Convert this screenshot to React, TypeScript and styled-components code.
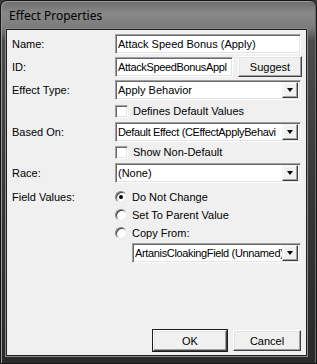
import React from 'react'
import styled, { createGlobalStyle } from 'styled-components'

const GlobalStyle = createGlobalStyle`
  html, body {
    margin: 0;
    padding: 0;
    background: #3a3a3a;
  }
  body {
    font-family: "Liberation Sans", Arial, sans-serif;
    font-size: 11px;
    color: #000;
  }
`

const Window = styled.div`
  box-sizing: border-box;
  width: 317px;
  height: 364px;
  display: flex;
  flex-direction: column;
  border: 1px solid #141414;
  border-radius: 7px 7px 0 0;
  background: linear-gradient(
    to bottom,
    #6c6c6c 0,
    #888888 12px,
    #7c7c7c 26px,
    #4c4c4c 40px,
    #363636 200px,
    #2a2a2a 100%
  );
  box-shadow: inset 1px 1px 0 #9a9a9a, inset -1px 0 0 #6a6a6a;
`

const TitleBar = styled.div`
  height: 28px;
  display: flex;
  align-items: center;
  padding-left: 8px;
  font-family: "Noto Sans", "Open Sans", sans-serif;
  font-size: 12px;
  color: #000;
`

const Client = styled.div`
  box-sizing: border-box;
  flex: 1;
  margin: 0 9px 7px 5px;
  display: flex;
  flex-direction: column;
  padding: 4px 5px 4px 5px;
  background: #f0f0f0;
  border: 1px solid #1e1e1e;
  box-shadow: 0 0 0 1px #8c8c8c;
`

const Row = styled.div<{ $top?: number; $h?: number }>`
  display: grid;
  grid-template-columns: 103px 1fr;
  align-items: center;
  margin-top: ${(p) => p.$top ?? 0}px;
  height: ${(p) => p.$h ?? 20}px;
`

const Label = styled.span`
  white-space: nowrap;
`

const Field = styled.div<{ $w?: number; $tight?: boolean }>`
  box-sizing: border-box;
  height: 20px;
  width: ${(p) => (p.$w ? `${p.$w}px` : 'auto')};
  display: flex;
  align-items: center;
  padding: 0 2px;
  background: #fff;
  border: 1px solid;
  border-color: #a0a0a0 #fff #fff #a0a0a0;
  box-shadow: inset 1px 1px 0 #696969, inset -1px -1px 0 #e3e3e3;
  white-space: nowrap;
  overflow: hidden;
  letter-spacing: ${(p) => (p.$tight ? '-0.35px' : 'normal')};
`

const Inline = styled.div`
  display: flex;
  gap: 5px;
  align-items: center;
`

const Button = styled.button<{ $w: number; $h?: number; $default?: boolean }>`
  box-sizing: border-box;
  width: ${(p) => p.$w}px;
  height: ${(p) => p.$h ?? 21}px;
  padding: 0;
  font: inherit;
  color: #000;
  background: #f0f0f0;
  border: 1px solid;
  border-color: #fff #404040 #404040 #fff;
  box-shadow: inset -1px -1px 0 #a0a0a0, inset 1px 1px 0 #e3e3e3;
  outline: ${(p) => (p.$default ? '1px solid #1e1e1e' : 'none')};
  outline-offset: 0;
`

const Select = styled(Field)<{ $indent?: number }>`
  padding: 0 2px 0 2px;
  margin-left: ${(p) => p.$indent ?? 0}px;
  justify-content: space-between;
`

const SelectText = styled.span`
  flex: 1;
  min-width: 0;
  overflow: hidden;
  white-space: nowrap;
`

const Arrow = styled.span`
  box-sizing: border-box;
  flex: none;
  width: 16px;
  height: 16px;
  display: flex;
  align-items: center;
  justify-content: center;
  background: #f0f0f0;
  border: 1px solid;
  border-color: #f0f0f0 #404040 #404040 #f0f0f0;
  box-shadow: inset -1px -1px 0 #a0a0a0, inset 1px 1px 0 #fff;
  &::after {
    content: '';
    width: 0;
    height: 0;
    border-left: 3.5px solid transparent;
    border-right: 3.5px solid transparent;
    border-top: 4px solid #000;
  }
`

const CheckRow = styled.label`
  display: flex;
  align-items: center;
  gap: 5px;
`

const Box = styled.span`
  box-sizing: border-box;
  width: 13px;
  height: 13px;
  background: #fff;
  border: 1px solid;
  border-color: #a0a0a0 #fff #fff #a0a0a0;
  box-shadow: inset 1px 1px 0 #696969, inset -1px -1px 0 #e3e3e3;
`

const Radio = styled.span<{ $on?: boolean }>`
  box-sizing: border-box;
  width: 12px;
  height: 12px;
  border-radius: 50%;
  display: flex;
  align-items: center;
  justify-content: center;
  background: #fff;
  border: 1px solid;
  border-color: #808080 #e8e8e8 #e8e8e8 #808080;
  box-shadow: inset 1px 1px 0 #404040;
  &::after {
    content: '';
    width: 4px;
    height: 4px;
    border-radius: 50%;
    background: ${(p) => (p.$on ? '#000' : 'transparent')};
  }
`

const Spacer = styled.div`
  flex: 1;
`

const Footer = styled.div`
  display: flex;
  justify-content: flex-end;
  gap: 6px;
`

export default function App() {
  return (
    <>
      <GlobalStyle />
      <Window>
        <TitleBar>Effect Properties</TitleBar>
        <Client>
          <Row>
            <Label>Name:</Label>
            <Field>Attack Speed Bonus (Apply)</Field>
          </Row>
          <Row $top={2} $h={21}>
            <Label>ID:</Label>
            <Inline>
              <Field $w={118} $tight>
                AttackSpeedBonusAppl
              </Field>
              <Button $w={64}>Suggest</Button>
            </Inline>
          </Row>
          <Row $top={3}>
            <Label>Effect Type:</Label>
            <Select>
              <SelectText>Apply Behavior</SelectText>
              <Arrow />
            </Select>
          </Row>
          <Row $top={4} $h={14}>
            <span />
            <CheckRow>
              <Box />
              Defines Default Values
            </CheckRow>
          </Row>
          <Row $top={4}>
            <Label>Based On:</Label>
            <Select $tight>
              <SelectText>Default Effect (CEffectApplyBehavi</SelectText>
              <Arrow />
            </Select>
          </Row>
          <Row $top={3} $h={14}>
            <span />
            <CheckRow>
              <Box />
              Show Non-Default
            </CheckRow>
          </Row>
          <Row $top={4}>
            <Label>Race:</Label>
            <Select>
              <SelectText>(None)</SelectText>
              <Arrow />
            </Select>
          </Row>
          <Row $top={5} $h={18}>
            <Label>Field Values:</Label>
            <CheckRow>
              <Radio $on />
              Do Not Change
            </CheckRow>
          </Row>
          <Row $h={18}>
            <span />
            <CheckRow>
              <Radio />
              Set To Parent Value
            </CheckRow>
          </Row>
          <Row $h={18}>
            <span />
            <CheckRow>
              <Radio />
              Copy From:
            </CheckRow>
          </Row>
          <Row $top={1}>
            <span />
            <Select $indent={17} $tight>
              <SelectText>ArtanisCloakingField (Unnamed)</SelectText>
              <Arrow />
            </Select>
          </Row>
          <Spacer />
          <Footer>
            <Button $w={74} $h={21} $default>
              OK
            </Button>
            <Button $w={68} $h={21}>
              Cancel
            </Button>
          </Footer>
        </Client>
      </Window>
    </>
  )
}
